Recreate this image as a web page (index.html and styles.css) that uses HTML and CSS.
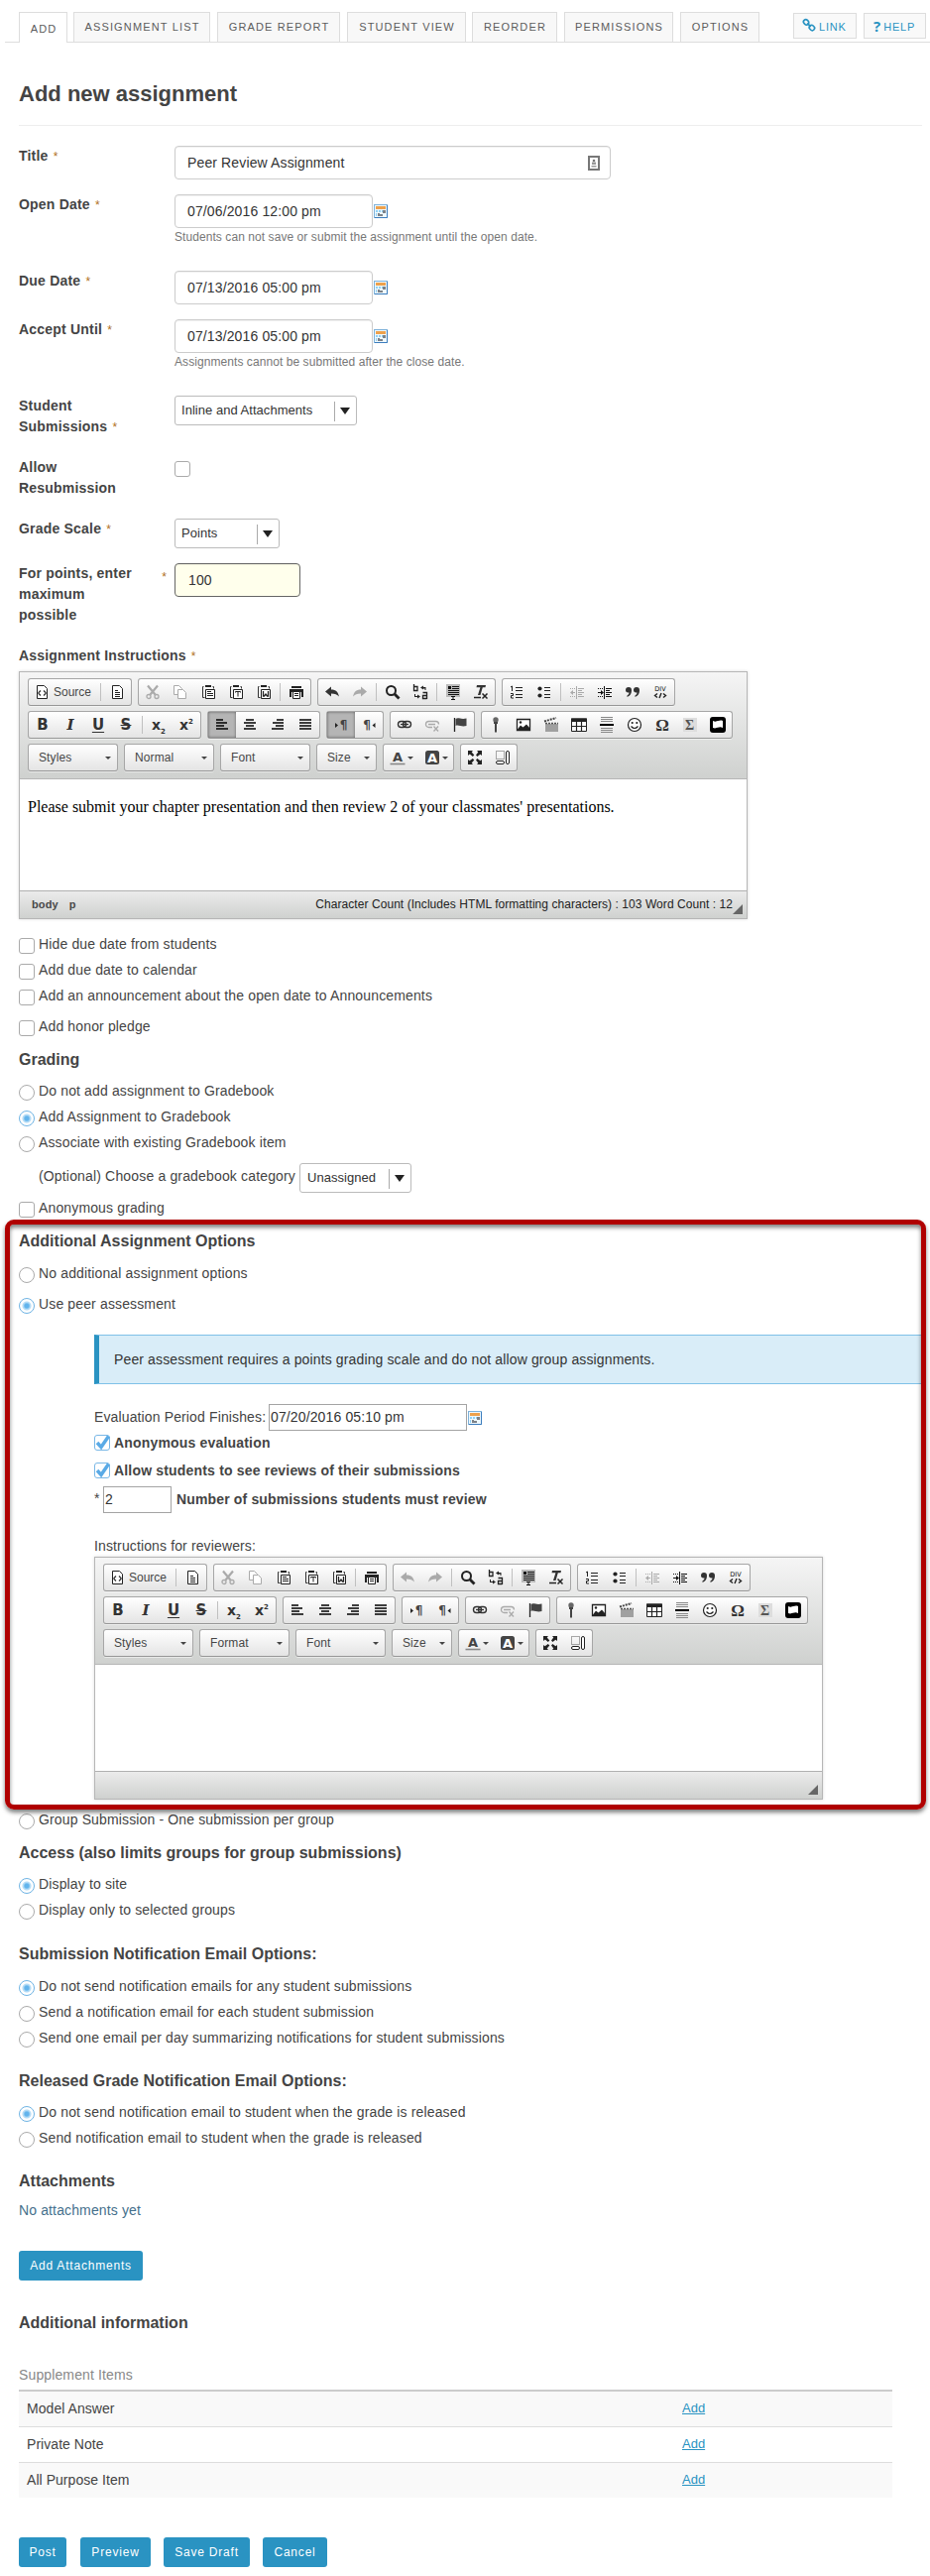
FILE: index.html
```html
<!DOCTYPE html>
<html lang="en">
<head>
<meta charset="utf-8">
<title>Add new assignment</title>
<link rel="stylesheet" href="styles.css">
</head>
<body>
<svg class="sprite" aria-hidden="true">
  <symbol id="cal" viewBox="0 0 14 14"><rect x=".5" y=".5" width="13" height="13" fill="#eef8fd" stroke="#7fb2da"/><path d="M13.500 1v12.500H1" stroke="#3c7dbd" fill="none"/><path d="M2 2h10v3H2z" fill="#eda14c"/><path d="M2 6h2v2H2zM5 6h2v2H5zM8 6h1v2H8zM2 9h1v3H2z" fill="#8fd0f4"/><path d="M9 6h3v3H9zM6 10h3v2H6zM4 9h2v3H4z" fill="#7d8288"/></symbol>
  <symbol id="card" viewBox="0 0 12 15"><path d="M1 1h10v13H1z" fill="#fff" stroke="#777" stroke-width="2"/><circle cx="6" cy="5" r="1.300" fill="#777"/><path d="M4 6.500h4V9H4zM3.500 10h5v1.500h-5z" fill="#999"/></symbol>
  <symbol id="chain" viewBox="0 0 14 14"><g fill="none" stroke="#2a93c2" stroke-width="1.700"><rect x="1.300" y="2" width="5.600" height="4.600" rx="2.300" transform="rotate(45 4.100 4.300)"/><rect x="7.100" y="7.700" width="5.600" height="4.600" rx="2.300" transform="rotate(45 9.900 10)"/><path d="M5.200 5.300l3.600 3.600"/></g></symbol>
  <symbol id="source" viewBox="0 0 16 16"><path d="M3.500 1.500h7l3 3v10h-10z" fill="#fff" stroke="#222"/><path d="M7 6.500L5 8.500v1l2 2M10 6.500l2 2v1l-2 2" fill="none" stroke="#333" stroke-width="1.300"/></symbol>
  <symbol id="page" viewBox="0 0 16 16"><path d="M3.500 1.500h7l3 3v10h-10z" fill="#fff" stroke="#222"/><path d="M6 6.500h3M6 8.500h5M6 10.500h5M6 12.500h5" stroke="#222"/></symbol>
  <symbol id="cut" viewBox="0 0 16 16"><g stroke="currentColor" fill="none"><path d="M3 1.500l7.500 9M13 1.500l-7.500 9" stroke-width="2.200"/><circle cx="4" cy="12.500" r="2" stroke-width="1.300"/><circle cx="12" cy="12.500" r="2" stroke-width="1.300"/></g></symbol>
  <symbol id="copy" viewBox="0 0 16 16"><g fill="#fff" stroke="currentColor"><path d="M1.500 1.500h5l3 3v6h-8z"/><path d="M5.500 5.500h5l3 3v6h-8z"/></g></symbol>
  <symbol id="board" viewBox="0 0 16 16"><path d="M3.500 2.500h-1v11h2M12.500 2.500h1v2" fill="none" stroke="#333"/><path d="M5 1h6v2H5z" fill="#222"/><path d="M5.500 5.500h9v9h-9z" fill="#fff" stroke="#222"/></symbol>
  <symbol id="paste" viewBox="0 0 16 16"><use href="#board"/><path d="M7 7.500h4M7 9.500h6M7 11.500h6" stroke="#222"/></symbol>
  <symbol id="pastet" viewBox="0 0 16 16"><use href="#board"/><path d="M7.500 8.500v-1h5v1M10 7.500v5" fill="none" stroke="#222"/></symbol>
  <symbol id="pastew" viewBox="0 0 16 16"><use href="#board"/><path d="M7.500 7v5h1l1.500-2 1.500 2h1V7" fill="none" stroke="#222" stroke-width="1.300"/></symbol>
  <symbol id="print" viewBox="0 0 16 16"><path d="M3 2h10v2H3zM1 5h14v8h-2V8H3v5H1z" fill="#222"/><path d="M4.500 7.500h7v7h-7z" fill="#fff" stroke="#222"/><path d="M6 9.500h4M6 11.500h4" stroke="#222"/></symbol>
  <symbol id="undo" viewBox="0 0 16 16"><path d="M1 7.500l6-5v3c5 0 7 2.500 8 7-2-2-4-3-8-3v3z" fill="currentColor"/></symbol>
  <symbol id="redo" viewBox="0 0 16 16"><path d="M15 7.500l-6-5v3c-5 0-7 2.500-8 7 2-2 4-3 8-3v3z" fill="currentColor"/></symbol>
  <symbol id="find" viewBox="0 0 16 16"><circle cx="6.500" cy="6.500" r="4.500" fill="none" stroke="#222" stroke-width="2"/><path d="M10 10l4.500 4.500" stroke="#222" stroke-width="2.800"/></symbol>
  <symbol id="replace" viewBox="0 0 16 16"><path d="M1.500 0v6.500h3.500v-4H1.500M10.500 8.500h4V15M14.500 11.500h-4v3h4" fill="none" stroke="#222" stroke-width="1.300"/><path d="M8 3.500l3-2v1.500h2.500v3h-1V4.500H11v1zM8 12.500l-3-2V12H3v-2H2v3h3v1.500z" fill="#222"/></symbol>
  <symbol id="selall" viewBox="0 0 16 16"><path d="M1 0h14v13H1z" fill="#bbb"/><path d="M3 2h3v3H3z" fill="#111"/><path d="M7 2.500h7M7 4.500h7M3 6.500h11M3 8.500h11M3 10.500h11" stroke="#111"/><path d="M6 12.500h4M6 15.500h4M8 12v4" stroke="#111"/></symbol>
  <symbol id="rmfmt" viewBox="0 0 16 16"><path d="M4 1h9l-.5 2.200H9.800L7.500 11H5l2.400-7.800H3.500z" fill="#333"/><path d="M1 13.500h7M9.500 9.500l5 5M14.500 9.500l-5 5" stroke="#222" stroke-width="1.500"/></symbol>
  <symbol id="nlist" viewBox="0 0 16 16"><path d="M2 3l1.500-1v5M2 9.500h2.500v2H2.500v2.500H5" fill="none" stroke="#222"/><path d="M7 3.500h7M7 6.500h7M7 10.500h7M7 13.500h7" stroke="#222" stroke-width="1.200"/></symbol>
  <symbol id="blist" viewBox="0 0 16 16"><circle cx="3.500" cy="4.500" r="2.100" fill="#222"/><circle cx="3.500" cy="11.500" r="2.100" fill="#222"/><path d="M8 3.500h6M8 6.500h6M8 10.500h6M8 13.500h6" stroke="#222" stroke-width="1.200"/></symbol>
  <symbol id="outd" viewBox="0 0 16 16"><g stroke="currentColor"><path d="M7.500 2v13"/><path d="M9 4.500h6M9 6.500h4M9 8.500h6M9 10.500h4M9 12.500h6"/><path d="M1 4.500h5M1 12.500h5" stroke-dasharray="1 1"/><path d="M2 8.500h4"/></g><path d="M1 8.500L4 6v5z" fill="currentColor"/></symbol>
  <symbol id="ind" viewBox="0 0 16 16"><g stroke="#111"><path d="M7.500 2v13"/><path d="M9 4.500h6M9 6.500h4M9 8.500h6M9 10.500h4M9 12.500h6"/><path d="M1 4.500h5M1 12.500h5" stroke-dasharray="1 1"/><path d="M1 8.500h4"/></g><path d="M7 8.500L4 6v5z" fill="#111"/></symbol>
  <symbol id="quote" viewBox="0 0 16 16"><path d="M1 6a2.600 2.600 0 1 1 6 0c0 4-2 6-4.500 7v-1.500C4 10.500 4.500 9.500 4.500 8.500 2 9 1 7.500 1 6zM9 6a2.600 2.600 0 1 1 6 0c0 4-2 6-4.500 7v-1.500c1.500-1 2-2 2-3C10 9 9 7.500 9 6z" fill="#333"/></symbol>
  <symbol id="div" viewBox="0 0 16 16"><text x="8" y="6.500" class="t-div">DIV</text><path d="M5 9.500L2.500 11.500 5 13.500M11 9.500l2.500 2-2.500 2M9 9l-2 5" fill="none" stroke="#222" stroke-width="1.400"/></symbol>
  <symbol id="al" viewBox="0 0 16 16"><path d="M2 3h7M2 6h11M2 9h8M2 12h12" stroke="#000" stroke-width="1.700"/></symbol>
  <symbol id="ac" viewBox="0 0 16 16"><path d="M4 3h8M2 6h12M4 9h8M2 12h12" stroke="#000" stroke-width="1.700"/></symbol>
  <symbol id="ar" viewBox="0 0 16 16"><path d="M7 3h7M3 6h11M6 9h8M2 12h12" stroke="#000" stroke-width="1.700"/></symbol>
  <symbol id="aj" viewBox="0 0 16 16"><path d="M2 3h12M2 6h12M2 9h12M2 12h12" stroke="#000" stroke-width="1.700"/></symbol>
  <symbol id="ltr" viewBox="0 0 16 16"><path d="M2 6v5l3-2.500z" fill="#222"/><text x="10.500" y="12" class="t-p">¶</text></symbol>
  <symbol id="rtl" viewBox="0 0 16 16"><path d="M14.500 6v5l-3-2.500z" fill="#222"/><text x="6" y="12" class="t-p">¶</text></symbol>
  <symbol id="link" viewBox="0 0 16 16"><g fill="none" stroke="currentColor" stroke-width="1.400"><rect x="1.500" y="4.500" width="8" height="6" rx="3"/><rect x="6.500" y="4.500" width="8" height="6" rx="3"/></g><path d="M4 7.500h8" stroke="currentColor" stroke-width="1.300"/></symbol>
  <symbol id="unlink" viewBox="0 0 16 16"><g fill="none" stroke="currentColor" stroke-width="1.300"><path d="M8 10.500H4.500a3 3 0 0 1 0-6h7a3 3 0 0 1 3 3"/><path d="M4 7.500h7M9.500 9.500l4.500 5M14 9.500l-4.500 5"/></g></symbol>
  <symbol id="flag" viewBox="0 0 16 16"><path d="M2.500 1v14" stroke="#222" stroke-width="1.300"/><path d="M3.500 2c3-2 5 1 11-.5V9c-5 1.500-8-1.500-11 0z" fill="#444"/></symbol>
  <symbol id="mic" viewBox="0 0 16 16"><circle cx="8" cy="3" r="2.700" fill="#666"/><path d="M6 5h4v2H6zM7 7h2v8.500H7z" fill="#444"/></symbol>
  <symbol id="img" viewBox="0 0 16 16"><path d="M1.500 2.500h13v11h-13z" fill="#fff" stroke="#222" stroke-width="1.300"/><path d="M2 12.500l3-4 2.500 2 3.500-3 3.500 4v2H2z" fill="#222"/><circle cx="5" cy="5.500" r="1.200" fill="#222"/></symbol>
  <symbol id="clap" viewBox="0 0 16 16"><path d="M2 7h13v8H2z" fill="#a0a0a0"/><path d="M1 4.500l12-3.500" stroke="#444" stroke-width="2" stroke-dasharray="2 1"/><path d="M2 6.500h13" stroke="#555" stroke-width="1.500" stroke-dasharray="2 1"/></symbol>
  <symbol id="table" viewBox="0 0 16 16"><path d="M.5 2h15v12.500H.5z" fill="#fff" stroke="#222"/><path d="M0 1.500h16V5H0z" fill="#222"/><path d="M.5 9.500h15M5.500 5v9M10.500 5v9" stroke="#222" stroke-width="1.200"/></symbol>
  <symbol id="hr" viewBox="0 0 16 16"><path d="M2 .5h12M2 2.500h12M2 4.500h12M2 11.500h12M2 13.500h12M2 15.500h12" stroke="#888"/><path d="M1 8h14" stroke="#000" stroke-width="2"/></symbol>
  <symbol id="smile" viewBox="0 0 16 16"><circle cx="8" cy="8" r="6.500" fill="#fff" stroke="#222" stroke-width="1.200"/><circle cx="5.700" cy="6" r="1.100" fill="#222"/><circle cx="10.300" cy="6" r="1.100" fill="#222"/><path d="M4.500 9.500q3.500 4 7 0" fill="none" stroke="#222" stroke-width="1.200"/></symbol>
  <symbol id="omega" viewBox="0 0 16 16"><text x="8" y="14" class="t-om">Ω</text></symbol>
  <symbol id="sigma" viewBox="0 0 16 16"><path d="M1 1h14v14H1z" fill="#ddd"/><text x="7.500" y="12.500" class="t-sg">Σ</text></symbol>
  <symbol id="kal" viewBox="0 0 16 16"><rect width="16" height="16" rx="3" fill="#000"/><path d="M3 4c4 2 6-1.500 10 0v7c-4-2-6 1.500-10 0z" fill="#fff"/></symbol>
  <symbol id="tcol" viewBox="0 0 16 16"><text x="8" y="11.500" class="t-a">A</text><path d="M.5 14.500h15" stroke="#888" stroke-width="1.600"/></symbol>
  <symbol id="bcol" viewBox="0 0 16 16"><rect x="1" y="1" width="14" height="14" rx="2.500" fill="#444"/><text x="8" y="12.500" class="t-a t-w">A</text></symbol>
  <symbol id="max" viewBox="0 0 16 16"><g fill="#222"><path d="M1 1h5L4.700 2.600 7.300 5.500 5.800 7 2.800 4.400 1 6zM15 1v5l-1.600-1.300L10.400 7 9 5.500l2.300-2.900L10 1zM1 15v-5l1.600 1.300L5.800 9l1.500 1.500-2.600 2.900L6 15zM15 15h-5l1.300-1.600L9 10.500 10.400 9l3 2.300L15 10z"/></g></symbol>
  <symbol id="blocks" viewBox="0 0 16 16"><path d="M1.500 1.500h8v8h-8z" fill="none" stroke="#555" stroke-dasharray="1 1"/><rect x="1.500" y="11.500" width="8" height="3" rx="1.500" fill="#fff" stroke="#222"/><rect x="11.500" y="1.500" width="3" height="13" rx="1.500" fill="#fff" stroke="#222"/></symbol>
</svg>

<nav class="tabs">
  <a class="tab w-add on">ADD</a><a class="tab w-list">ASSIGNMENT LIST</a><a class="tab w-grade">GRADE REPORT</a><a class="tab w-view">STUDENT VIEW</a><a class="tab w-reorder">REORDER</a><a class="tab w-perm">PERMISSIONS</a><a class="tab w-opt">OPTIONS</a>
  <div class="tools"><a class="tool"><svg class="chain"><use href="#chain"/></svg>LINK</a><a class="tool help"><b>?</b>HELP</a></div>
</nav>

<main class="page">
  <h1 class="title">Add new assignment</h1>

  <form class="form">
    <div class="row h49"><label class="lbl">Title <i>*</i></label><div class="box wide">Peer Review Assignment<svg class="card"><use href="#card"/></svg></div></div>
    <div class="row h77"><label class="lbl">Open Date <i>*</i></label><div><div class="date"><div class="box">07/06/2016 12:00 pm</div><svg class="cal"><use href="#cal"/></svg></div><p class="note">Students can not save or submit the assignment until the open date.</p></div></div>
    <div class="row h49"><label class="lbl">Due Date <i>*</i></label><div class="date"><div class="box">07/13/2016 05:00 pm</div><svg class="cal"><use href="#cal"/></svg></div></div>
    <div class="row h77"><label class="lbl">Accept Until <i>*</i></label><div><div class="date"><div class="box">07/13/2016 05:00 pm</div><svg class="cal"><use href="#cal"/></svg></div><p class="note">Assignments cannot be submitted after the close date.</p></div></div>
    <div class="row h62"><label class="lbl">Student<br>Submissions <i>*</i></label><div class="select s-sub"><span>Inline and Attachments</span></div></div>
    <div class="row h62"><label class="lbl">Allow<br>Resubmission</label><span class="check solo"></span></div>
    <div class="row h45"><label class="lbl">Grade Scale <i>*</i></label><div class="select s-pts"><span>Points</span></div></div>
    <div class="row h83"><label class="lbl pts"><span>For points, enter<br>maximum<br>possible</span><i>*</i></label><div class="box points">100</div></div>
  </form>

  <div class="lbl">Assignment Instructions <i>*</i></div>
  <div class="editor e1">
    <div class="bar">
      <div class="line">
        <div class="grp"><span class="src"><svg class="i"><use href="#source"/></svg>Source</span><s></s><svg class="i"><use href="#page"/></svg></div>
        <div class="grp"><svg class="i off"><use href="#cut"/></svg><svg class="i off"><use href="#copy"/></svg><svg class="i"><use href="#paste"/></svg><svg class="i"><use href="#pastet"/></svg><svg class="i"><use href="#pastew"/></svg><s></s><svg class="i"><use href="#print"/></svg></div>
        <div class="grp"><svg class="i"><use href="#undo"/></svg><svg class="i off"><use href="#redo"/></svg><s></s><svg class="i"><use href="#find"/></svg><svg class="i"><use href="#replace"/></svg><s></s><svg class="i"><use href="#selall"/></svg><svg class="i"><use href="#rmfmt"/></svg></div>
        <div class="grp"><svg class="i"><use href="#nlist"/></svg><svg class="i"><use href="#blist"/></svg><s></s><svg class="i off"><use href="#outd"/></svg><svg class="i"><use href="#ind"/></svg><svg class="i"><use href="#quote"/></svg><svg class="i"><use href="#div"/></svg></div>
      </div>
      <div class="line">
        <div class="grp"><b class="g">B</b><b class="g it">I</b><b class="g un">U</b><b class="g st">S</b><s></s><b class="g x">x<sub>2</sub></b><b class="g x">x<sup>2</sup></b></div>
        <div class="grp"><svg class="i act"><use href="#al"/></svg><svg class="i"><use href="#ac"/></svg><svg class="i"><use href="#ar"/></svg><svg class="i"><use href="#aj"/></svg></div>
        <div class="grp"><svg class="i act"><use href="#ltr"/></svg><svg class="i"><use href="#rtl"/></svg></div>
        <div class="grp"><svg class="i"><use href="#link"/></svg><svg class="i off"><use href="#unlink"/></svg><svg class="i"><use href="#flag"/></svg></div>
        <div class="grp"><svg class="i"><use href="#mic"/></svg><svg class="i"><use href="#img"/></svg><svg class="i"><use href="#clap"/></svg><svg class="i"><use href="#table"/></svg><svg class="i"><use href="#hr"/></svg><svg class="i"><use href="#smile"/></svg><svg class="i"><use href="#omega"/></svg><svg class="i"><use href="#sigma"/></svg><svg class="i"><use href="#kal"/></svg></div>
      </div>
      <div class="line">
        <div class="combo">Styles</div><div class="combo">Normal</div><div class="combo">Font</div><div class="combo sm">Size</div>
        <div class="grp"><span class="col"><svg class="i"><use href="#tcol"/></svg></span><span class="col"><svg class="i"><use href="#bcol"/></svg></span></div>
        <div class="grp"><svg class="i"><use href="#max"/></svg><svg class="i"><use href="#blocks"/></svg></div>
      </div>
    </div>
    <div class="area">Please submit your chapter presentation and then review 2 of your classmates' presentations.</div>
    <div class="foot"><span class="path">body</span><span class="path">p</span><span class="count">Character Count (Includes HTML formatting characters) : 103 Word Count : 12</span><u class="grip"></u></div>
  </div>

  <div class="opt m12"><span class="check"></span>Hide due date from students</div>
  <div class="opt"><span class="check"></span>Add due date to calendar</div>
  <div class="opt"><span class="check"></span>Add an announcement about the open date to Announcements</div>
  <div class="opt m5"><span class="check"></span>Add honor pledge</div>

  <h2 class="head m8">Grading</h2>
  <div class="opt m7"><span class="radio"></span>Do not add assignment to Gradebook</div>
  <div class="opt"><span class="radio on"></span>Add Assignment to Gradebook</div>
  <div class="opt"><span class="radio"></span>Associate with existing Gradebook item</div>
  <div class="category"><span>(Optional) Choose a gradebook category</span><div class="select s-cat"><span>Unassigned</span></div></div>
  <div class="opt m2"><span class="check"></span>Anonymous grading</div>

  <section class="peer">
    <h2 class="head m8">Additional Assignment Options</h2>
    <div class="opt m8"><span class="radio"></span>No additional assignment options</div>
    <div class="opt m5"><span class="radio on"></span>Use peer assessment</div>
    <div class="sub">
      <div class="info">Peer assessment requires a points grading scale and do not allow group assignments.</div>
      <div class="line26"><span class="evl">Evaluation Period Finishes:</span><div class="plain d">07/20/2016 05:10 pm</div><svg class="cal low"><use href="#cal"/></svg></div>
      <div class="bopt first"><span class="check"><svg viewBox="0 0 16 16"><path d="M3 8l4 4.500L14.500 1.500"/></svg></span>Anonymous evaluation</div>
      <div class="bopt"><span class="check"><svg viewBox="0 0 16 16"><path d="M3 8l4 4.500L14.500 1.500"/></svg></span>Allow students to see reviews of their submissions</div>
      <div class="num"><span class="st1">*</span><div class="plain n">2</div><b>Number of submissions students must review</b></div>
      <div class="rev">Instructions for reviewers:</div>
      <div class="editor e2">
        <div class="bar">
          <div class="line">
            <div class="grp"><span class="src"><svg class="i"><use href="#source"/></svg>Source</span><s></s><svg class="i"><use href="#page"/></svg></div>
            <div class="grp"><svg class="i off"><use href="#cut"/></svg><svg class="i off"><use href="#copy"/></svg><svg class="i"><use href="#paste"/></svg><svg class="i"><use href="#pastet"/></svg><svg class="i"><use href="#pastew"/></svg><s></s><svg class="i"><use href="#print"/></svg></div>
            <div class="grp"><svg class="i off"><use href="#undo"/></svg><svg class="i off"><use href="#redo"/></svg><s></s><svg class="i"><use href="#find"/></svg><svg class="i"><use href="#replace"/></svg><s></s><svg class="i"><use href="#selall"/></svg><svg class="i"><use href="#rmfmt"/></svg></div>
            <div class="grp"><svg class="i"><use href="#nlist"/></svg><svg class="i"><use href="#blist"/></svg><s></s><svg class="i off"><use href="#outd"/></svg><svg class="i"><use href="#ind"/></svg><svg class="i"><use href="#quote"/></svg><svg class="i"><use href="#div"/></svg></div>
          </div>
          <div class="line">
            <div class="grp"><b class="g">B</b><b class="g it">I</b><b class="g un">U</b><b class="g st">S</b><s></s><b class="g x">x<sub>2</sub></b><b class="g x">x<sup>2</sup></b></div>
            <div class="grp"><svg class="i"><use href="#al"/></svg><svg class="i"><use href="#ac"/></svg><svg class="i"><use href="#ar"/></svg><svg class="i"><use href="#aj"/></svg></div>
            <div class="grp"><svg class="i"><use href="#ltr"/></svg><svg class="i"><use href="#rtl"/></svg></div>
            <div class="grp"><svg class="i"><use href="#link"/></svg><svg class="i off"><use href="#unlink"/></svg><svg class="i"><use href="#flag"/></svg></div>
            <div class="grp"><svg class="i"><use href="#mic"/></svg><svg class="i"><use href="#img"/></svg><svg class="i"><use href="#clap"/></svg><svg class="i"><use href="#table"/></svg><svg class="i"><use href="#hr"/></svg><svg class="i"><use href="#smile"/></svg><svg class="i"><use href="#omega"/></svg><svg class="i"><use href="#sigma"/></svg><svg class="i"><use href="#kal"/></svg></div>
          </div>
          <div class="line">
            <div class="combo">Styles</div><div class="combo">Format</div><div class="combo">Font</div><div class="combo sm">Size</div>
            <div class="grp"><span class="col"><svg class="i"><use href="#tcol"/></svg></span><span class="col"><svg class="i"><use href="#bcol"/></svg></span></div>
            <div class="grp"><svg class="i"><use href="#max"/></svg><svg class="i"><use href="#blocks"/></svg></div>
          </div>
        </div>
        <div class="area"></div>
        <div class="foot"><u class="grip"></u></div>
      </div>
    </div>
    <div class="frame"></div>
  </section>

  <div class="opt m7"><span class="radio"></span>Group Submission - One submission per group</div>

  <h2 class="head m8">Access (also limits groups for group submissions)</h2>
  <div class="opt m7"><span class="radio on"></span>Display to site</div>
  <div class="opt"><span class="radio"></span>Display only to selected groups</div>

  <h2 class="head m19">Submission Notification Email Options:</h2>
  <div class="opt m8"><span class="radio on"></span>Do not send notification emails for any student submissions</div>
  <div class="opt"><span class="radio"></span>Send a notification email for each student submission</div>
  <div class="opt"><span class="radio"></span>Send one email per day summarizing notifications for student submissions</div>

  <h2 class="head m18">Released Grade Notification Email Options:</h2>
  <div class="opt m7"><span class="radio on"></span>Do not send notification email to student when the grade is released</div>
  <div class="opt"><span class="radio"></span>Send notification email to student when the grade is released</div>

  <h2 class="head m18">Attachments</h2>
  <p class="none">No attachments yet</p>
  <button class="btn attach" type="button">Add Attachments</button>

  <h2 class="head m30">Additional information</h2>
  <p class="caption">Supplement Items</p>
  <div class="items">
    <div class="item"><span>Model Answer</span><a>Add</a></div>
    <div class="item"><span>Private Note</span><a>Add</a></div>
    <div class="item"><span>All Purpose Item</span><a>Add</a></div>
  </div>
  <div class="actions"><button class="btn b1" type="button">Post</button><button class="btn b2" type="button">Preview</button><button class="btn b3" type="button">Save Draft</button><button class="btn b4" type="button">Cancel</button></div>
</main>
</body>
</html>
```
FILE: styles.css
```css
* { box-sizing: border-box; }
body { margin: 0; height: 2598px; background: #fff; color: #444; font: 14px/21px "Liberation Sans", Arial, sans-serif; letter-spacing: .13px; }
h1, h2, p { margin: 0; }
.sprite { display: none; }

.tabs { display: flex; align-items: flex-end; height: 43px; margin-left: 5px; padding-left: 14px; border-bottom: 1px solid #ddd; font-size: 11px; letter-spacing: 1.15px; color: #5c5c5c; }
.tab { height: 30px; margin-right: 7px; border: 1px solid #ddd; border-bottom: 0; background: #f8f8f8; text-align: center; line-height: 29px; white-space: nowrap; padding-left: 1px; }
.tab.on { height: 31px; margin-bottom: -1px; margin-right: 6px; background: #fff; line-height: 32px; }
.w-add { width: 49px; }
.w-list { width: 138px; }
.w-grade { width: 124px; }
.w-view { width: 120px; margin-right: 6px; }
.w-reorder { width: 86px; }
.w-perm { width: 110px; }
.w-opt { width: 80px; }
.tools { display: flex; gap: 7px; margin: 0 4px 3px auto; }
.tool { display: flex; align-items: center; width: 64px; height: 26px; padding: 2px 0 0 8px; border: 1px solid #ddd; background: #f9f9f9; color: #2a93c2; letter-spacing: .8px; }
.tool.help { width: 63px; padding-left: 9px; }
.tool b { font: bold 15px/20px "Open Sans", sans-serif; margin: -3px 3px 0 0; letter-spacing: 0; }
.chain { width: 14px; height: 14px; margin: -5px 3px 0 0; }

.page { width: 911px; margin-left: 19px; }
.title { margin-top: 36px; padding-top: 1px; padding-bottom: 16px; border-bottom: 1px solid #eee; font: bold 22px/30px "Liberation Sans", Arial, sans-serif; letter-spacing: 0; color: #444; }
.form { margin-top: 20px; }
.row { display: grid; grid-template-columns: 157px 1fr; align-items: start; }
.h45 { height: 45px; }
.h49 { height: 49px; }
.h62 { height: 62px; }
.h77 { height: 77px; }
.h83 { height: 83px; }
.lbl { font-weight: bold; letter-spacing: .2px; color: #444; }
.lbl i { margin-left: 1px; font: 12px "Liberation Sans", sans-serif; color: #b0701c; }
.pts { display: flex; justify-content: space-between; padding-right: 8px; }
.pts i { margin-top: 7px; }
.box { position: relative; width: 200px; height: 34px; padding-left: 12px; border: 1px solid #ccc; border-radius: 4px; background: #fff; box-shadow: inset 0 1px 1px rgba(0,0,0,.06); color: #333; line-height: 33px; }
.wide { width: 440px; }
.card { position: absolute; right: 10px; top: 9px; width: 12px; height: 15px; }
.points { width: 127px; border-color: #666; background: #ffffec; padding-left: 13px; }
.date { display: flex; align-items: center; gap: 1px; }
.cal { width: 14px; height: 14px; }
.note { font-size: 12px; line-height: 18px; letter-spacing: .07px; color: #777; }

.select { position: relative; height: 30px; padding-left: 6px; border: 1px solid #bbb; border-radius: 3px; background: #fff; color: #333; font-size: 13px; line-height: 28px; letter-spacing: .03px; }
.select::before { content: ""; position: absolute; right: 21px; top: 5px; height: 20px; border-left: 1px solid #aaa; }
.select::after { content: ""; position: absolute; right: 6px; top: 11px; border: 5.5px solid transparent; border-top: 7px solid #222; border-bottom: 0; }
.s-sub { width: 184px; }
.s-pts { width: 106px; }
.s-cat { width: 113px; padding-left: 7px; }

.check, .radio { flex: none; width: 16px; height: 16px; border: 1px solid #aaa; border-radius: 3px; background: #fff; }
.radio { border-radius: 50%; }
.radio.on { border-color: #6fb4e4; background: radial-gradient(circle, #62b4ec 0 2px, #b4dcf6 3.5px 4px, #fff 5px); }
.solo { margin-top: 4px; }
.opt { display: flex; height: 26px; gap: 4px; line-height: 26px; letter-spacing: .14px; }
.opt .check, .opt .radio { margin-top: 7px; }
.m2 { margin-top: 2px; }
.m5 { margin-top: 5px; }
.m7 { margin-top: 7px; }
.m8 { margin-top: 8px; }
.m12 { margin-top: 12px; }
.m18 { margin-top: 18px; }
.m19 { margin-top: 19px; }
.m30 { margin-top: 30px; }
.head { height: 24px; font: bold 16px/26px "Liberation Sans", Arial, sans-serif; letter-spacing: 0; color: #444; }
.category { display: flex; gap: 4px; margin-top: 8px; padding-left: 20px; height: 30px; line-height: 26px; letter-spacing: .16px; }

.editor { width: 735px; margin-top: 5px; border: 1px solid #b6b6b6; box-shadow: 0 0 3px rgba(0,0,0,.15); display: flex; flex-direction: column; letter-spacing: 0; }
.e1 { height: 250px; }
.e2 { height: 245px; margin-top: 0; }
.bar { height: 108px; padding: 6px 8px; border-bottom: 1px solid #b6b6b6; background: linear-gradient(#f5f5f5, #cfd1cf); display: flex; flex-direction: column; gap: 5px; }
.line { display: flex; gap: 6px; }
.grp, .combo { display: flex; align-items: center; height: 28px; border: 1px solid #a6a6a6; border-bottom-color: #979797; border-radius: 3px; background: linear-gradient(#fff, #e4e4e4); box-shadow: 0 1px 0 rgba(255,255,255,.5); }
.grp s { width: 1px; height: 18px; margin: 0 2px; background: #c0c0c0; }
.i { width: 28px; height: 26px; padding: 5px 6px; color: #333; flex: none; }
.i.off { color: #aaa; }
.act { background: #b5b5b5; box-shadow: inset 0 0 3px rgba(0,0,0,.5); }
.src { display: flex; align-items: center; width: 70px; font-size: 12px; color: #474747; }
.src .i { width: 25px; padding-left: 5px; padding-right: 4px; }
.g { width: 28px; text-align: center; font: bold 15px/26px "DejaVu Sans", sans-serif; color: #333; }
.it { font-family: "DejaVu Serif", serif; font-style: italic; }
.un { text-decoration: underline; text-underline-offset: 2px; }
.st { text-decoration: line-through; }
.x { font-size: 14px; line-height: 22px; }
.x sub, .x sup { font-size: 7px; line-height: 0; }
.combo { width: 91px; padding: 0 6px 0 10px; justify-content: space-between; font-size: 12px; letter-spacing: .1px; color: #474747; }
.combo::after, .col::after { content: ""; border: 3px solid transparent; border-top-color: #444; border-bottom: 0; }
.sm { width: 61px; }
.col { display: flex; align-items: center; width: 35px; }
.col .i { margin-right: -4px; }
.area { flex: 1; padding: 15px 8px; background: #fff; color: #000; font: 16px/26px "Liberation Serif", serif; }
.foot { position: relative; display: flex; height: 28px; padding: 0 14px 0 12px; border-top: 1px solid #b0b0b0; background: linear-gradient(#ebebeb, #cfd1cf); font-size: 12px; line-height: 27px; color: #222; }
.path { margin-right: 11px; font-size: 11px; font-weight: bold; letter-spacing: .1px; color: #484848; }
.count { margin-left: auto; letter-spacing: .06px; }
.grip { position: absolute; right: 4px; bottom: 4px; border: 5px solid transparent; border-right-color: #666; border-bottom-color: #666; }

.t-div { font: 6.5px "DejaVu Sans", sans-serif; text-anchor: middle; fill: #111; }
.t-p { font: bold 12px "DejaVu Sans", sans-serif; text-anchor: middle; fill: #444; }
.t-om { font: bold 17px "Liberation Serif", serif; text-anchor: middle; fill: #333; }
.t-sg { font: bold 14px "Liberation Serif", serif; text-anchor: middle; fill: #555; }
.t-a { font: bold 13px "DejaVu Sans", sans-serif; text-anchor: middle; fill: #444; }
.t-w { fill: #fff; }

.peer { position: relative; }
.frame { position: absolute; left: -14px; top: -9px; width: 929px; height: 595px; border: 5px solid #b00000; border-radius: 9px; box-shadow: 0 3px 4px rgba(0,0,0,.5), inset 0 3px 4px rgba(0,0,0,.5); pointer-events: none; }
.sub { padding-left: 76px; margin-top: 18px; }
.info { height: 50px; padding-left: 15px; border: 1px solid #7fc1e8; border-left: 5px solid #2a93c2; border-right: 0; background: #d9edf8; color: #333; line-height: 49px; }
.line26 { display: flex; margin-top: 20px; height: 27px; line-height: 26px; }
.evl { width: 176px; }
.plain { height: 27px; padding-left: 1px; border: 1px solid #a4a4a4; background: #fff; color: #333; line-height: 24px; }
.d { width: 200px; margin-right: 1px; }
.n { width: 69px; margin-right: 5px; line-height: 25px; }
.low { margin-top: 7px; }
.bopt { display: flex; gap: 4px; height: 27px; line-height: 22px; font-weight: bold; letter-spacing: .18px; }
.bopt.first { margin-top: 1px; height: 28px; }
.bopt .check { margin-top: 3px; border-color: #7ab8e6; }
.bopt svg { display: block; width: 16px; height: 16px; margin: -1px; }
.bopt path { fill: none; stroke: #5aaae6; stroke-width: 3.5; }
.num { display: flex; height: 27px; line-height: 26px; letter-spacing: .15px; }
.st1 { width: 9px; line-height: 24px; }
.rev { margin-top: 23px; }

.none { margin-top: 8px; color: #45708c; }
.btn { height: 30px; padding: 0; border: 0; border-radius: 3px; background: #2a93c2; color: #fff; font: 12px "Liberation Sans", sans-serif; letter-spacing: .8px; }
.attach { display: block; width: 125px; margin-top: 30px; }
.caption { margin-top: 31px; color: #888; }
.items { width: 881px; margin-top: 4px; border-top: 2px solid #ccc; }
.item { display: flex; height: 36px; padding-left: 8px; border-bottom: 1px solid #ddd; line-height: 35px; letter-spacing: .05px; }
.item:nth-child(odd) { background: #f9f9f9; }
.item:last-child { border-bottom: 0; height: 35px; }
.item span { width: 661px; }
.item a { font-size: 13px; line-height: 34px; letter-spacing: 0; color: #2a93c2; text-decoration: underline; }
.actions { display: flex; margin-top: 40px; }
.b1 { width: 48px; margin-right: 14px; }
.b2 { width: 71px; margin-right: 13px; }
.b3 { width: 87px; margin-right: 13px; }
.b4 { width: 65px; }
```
